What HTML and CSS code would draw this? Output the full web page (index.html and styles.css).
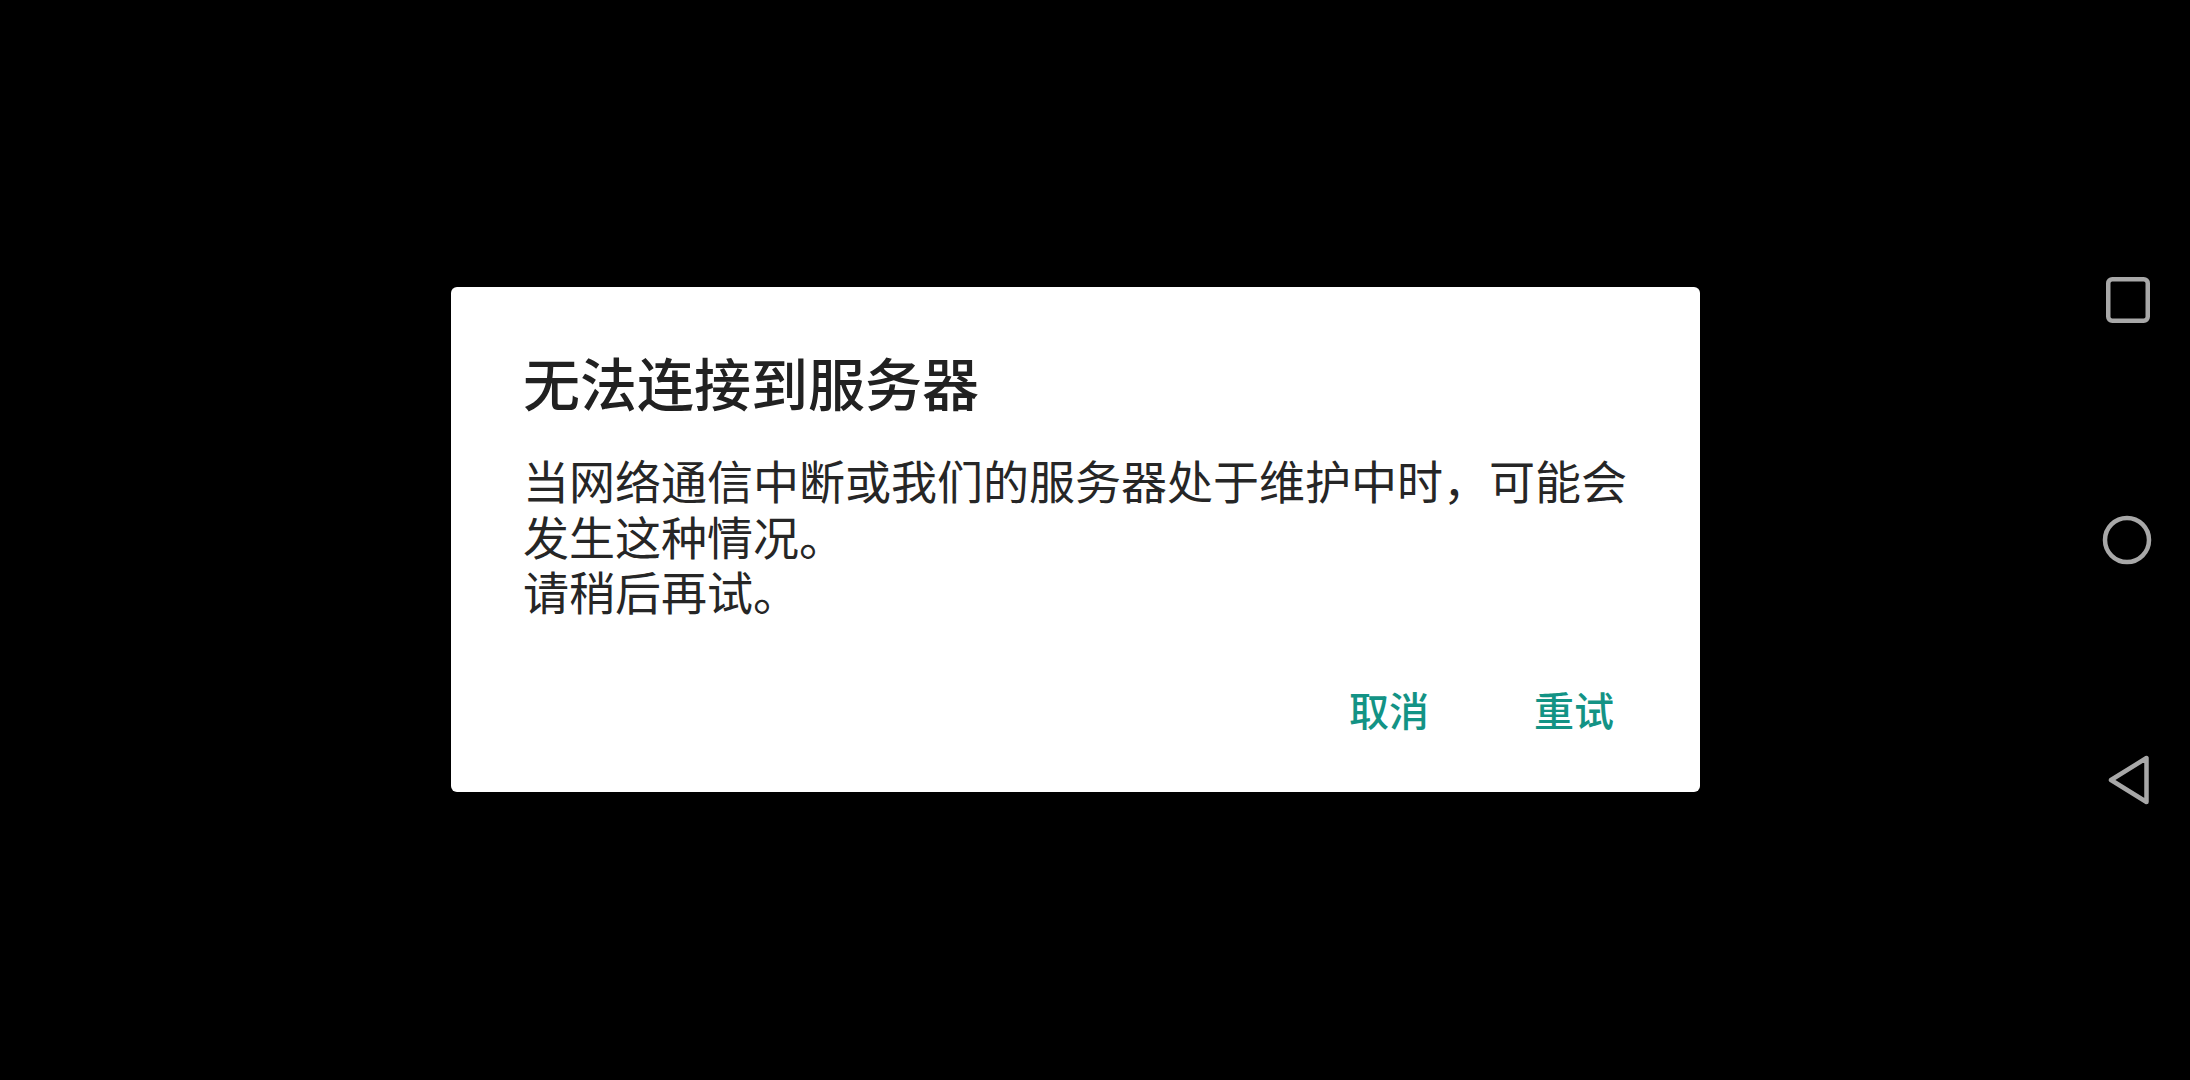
FILE: index.html
```html
<!DOCTYPE html>
<html lang="zh-CN">
<head>
<meta charset="utf-8">
<title>无法连接到服务器</title>
<link rel="stylesheet" href="styles.css">
</head>
<body>
<main class="screen">
  <section class="dialog" role="alertdialog" aria-labelledby="dlg-title">
    <h1 class="dialog-title" id="dlg-title">无法连接到服务器</h1>
    <p class="dialog-body">当网络通信中断或我们的服务器处于维护中时，可能会<br>发生这种情况。<br>请稍后再试。</p>
    <div class="dialog-actions">
      <button class="dialog-btn" type="button">取消</button>
      <button class="dialog-btn" type="button">重试</button>
    </div>
  </section>
</main>
<nav class="navbar">
  <span class="nav-slot">
    <svg class="nav-icon" width="48" height="48" viewBox="0 0 48 48"><rect x="4.25" y="3.25" width="39.5" height="41.5" rx="4" fill="none" stroke="#a8a8a8" stroke-width="4.5"/></svg>
  </span>
  <span class="nav-slot">
    <svg class="nav-icon" width="52" height="52" viewBox="0 0 52 52"><circle cx="25" cy="26" r="22" fill="none" stroke="#a8a8a8" stroke-width="4.5"/></svg>
  </span>
  <span class="nav-slot">
    <svg class="nav-icon" width="48" height="56" viewBox="0 0 48 56"><polygon points="7,28 42.5,6 42.5,50" fill="none" stroke="#a8a8a8" stroke-width="4.5" stroke-linejoin="round"/></svg>
  </span>
</nav>
</body>
</html>
```
FILE: styles.css
```css
html, body {
  margin: 0;
  padding: 0;
  background: #000;
}

body {
  width: 2190px;
  height: 1080px;
  display: flex;
  overflow: hidden;
  font-family: "Noto Sans CJK SC", "Noto Sans", sans-serif;
}

.screen {
  flex: 1;
  padding: 287px 0 0 451px;
  box-sizing: border-box;
}

.dialog {
  width: 1249px;
  box-sizing: border-box;
  background: #fff;
  border-radius: 6px;
  padding: 66px 72px 51px;
  display: flex;
  flex-direction: column;
}

.dialog-title {
  margin: 0 0 42px;
  font-size: 57px;
  line-height: 57px;
  font-weight: 500;
  color: #212121;
  white-space: nowrap;
}

.dialog-body {
  margin: 0;
  font-size: 46px;
  line-height: 55.5px;
  font-weight: 400;
  color: #262626;
  white-space: nowrap;
}

.dialog-actions {
  margin: 58px 0 0 0;
  display: flex;
  justify-content: flex-end;
  gap: 77px;
}

.dialog-btn {
  background: none;
  border: 0;
  padding: 12px 14px;
  margin: 0;
  font-family: "Noto Sans CJK SC", "Noto Sans", sans-serif;
  font-size: 40px;
  line-height: 40px;
  font-weight: 500;
  color: #139385;
  cursor: pointer;
}

.navbar {
  width: 124px;
  display: flex;
  flex-direction: column;
  align-items: center;
  justify-content: center;
  gap: 160px;
}

.nav-slot {
  height: 80px;
  display: flex;
  align-items: center;
  justify-content: center;
}

.nav-icon {
  display: block;
}
```
